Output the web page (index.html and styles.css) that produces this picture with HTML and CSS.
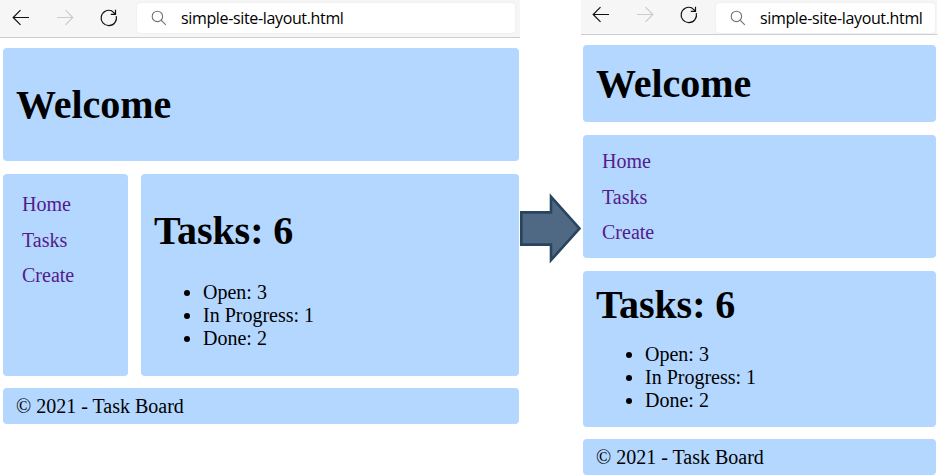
FILE: index.html
```html
<!DOCTYPE html>
<html lang="en">
<head>
<meta charset="utf-8">
<title>Simple site layout</title>
<link rel="stylesheet" href="styles.css">
</head>
<body>
<div class="stage">
  <section class="browser wide">
    <div class="toolbar">
      <svg class="controls" width="137" height="37" viewBox="0 0 137 37" fill="none">
        <path class="ink" d="M29 17.5H13.5M20.5 10.2L13.2 17.5L20.5 24.8"/>
        <path class="muted" d="M57 17.5H72.5M65.5 10.2L72.8 17.5L65.5 24.8"/>
        <path class="ink" d="M116.3 16.2A7.7 7.7 0 1 1 111.8 10.9L115.5 14.2M115.5 9.8V14.3H110.8"/>
      </svg>
      <div class="address">
        <svg class="search" width="16" height="16" viewBox="0 0 16 16" fill="none"><circle cx="6.4" cy="6.4" r="5.2"/><path d="M10.1 10.1L14.8 14.8"/></svg>
        <span>simple-site-layout.html</span>
      </div>
    </div>
    <div class="page">
      <header class="card"><h1>Welcome</h1></header>
      <nav class="card"><a>Home</a><a>Tasks</a><a>Create</a></nav>
      <main class="card">
        <h1>Tasks: 6</h1>
        <ul><li>Open: 3</li><li>In Progress: 1</li><li>Done: 2</li></ul>
      </main>
      <footer class="card">© 2021 - Task Board</footer>
    </div>
  </section>
  <svg class="arrow" width="61" height="72" viewBox="0 0 61 72"><path d="M1.3 20.4H31V4.6L59.5 36.4L31 68.2V52.6H1.3Z"/></svg>
  <section class="browser narrow">
    <div class="toolbar">
      <svg class="controls" width="135" height="34" viewBox="0 0 135 34" fill="none">
        <path class="ink" d="M28 14.5H12.5M19.5 7.2L12.2 14.5L19.5 21.8"/>
        <path class="muted" d="M56 14.5H71.5M64.5 7.2L71.8 14.5L64.5 21.8"/>
        <path class="ink" d="M115.3 13.2A7.7 7.7 0 1 1 110.8 7.9L114.5 11.2M114.5 6.8V11.3H109.8"/>
      </svg>
      <div class="address">
        <svg class="search" width="16" height="16" viewBox="0 0 16 16" fill="none"><circle cx="6.4" cy="6.4" r="5.2"/><path d="M10.1 10.1L14.8 14.8"/></svg>
        <span>simple-site-layout.html</span>
      </div>
    </div>
    <div class="page">
      <header class="card"><h1>Welcome</h1></header>
      <nav class="card"><a>Home</a><a>Tasks</a><a>Create</a></nav>
      <main class="card">
        <h1>Tasks: 6</h1>
        <ul><li>Open: 3</li><li>In Progress: 1</li><li>Done: 2</li></ul>
      </main>
      <footer class="card">© 2021 - Task Board</footer>
    </div>
  </section>
</div>
</body>
</html>
```
FILE: styles.css
```css
* { box-sizing: border-box; }
body {
  margin: 0;
  background: #fff;
  color: #000;
  font: 20px/23px "Liberation Serif", serif;
}
.stage {
  display: grid;
  grid-template-columns: 520px 61px 357px;
  height: 476px;
  overflow: hidden;
}
.toolbar {
  display: flex;
  align-items: flex-start;
  height: 38px;
  padding-right: 5px;
  background: #f6f6f6;
  border-bottom: 1px solid #cecece;
}
.narrow .toolbar { height: 35px; padding-right: 2px; border-right: 1px solid #fff; }
.controls { flex: none; }
.ink { stroke: #111; stroke-width: 1.2; }
.muted { stroke: #ccc; stroke-width: 1.2; }
.address {
  flex: 1;
  display: flex;
  align-items: center;
  height: 30px;
  margin-top: 3px;
  padding-left: 14px;
  background: #fff;
  border-radius: 4px;
  box-shadow: 0 0 2px #e2e2e2;
  font: 16px/22px "Open Sans", sans-serif;
  letter-spacing: -0.35px;
  white-space: nowrap;
}
.search { flex: none; margin-right: 14px; stroke: #707070; stroke-width: 1.1; }
.page { padding: 10px 1px 0 3px; }
.wide .page {
  display: grid;
  grid-template-columns: 125px 378px;
  grid-template-rows: 113px 13px 202px 12px 36px;
  column-gap: 13px;
}
.wide header { grid-area: 1 / 1 / 2 / 3; }
.wide nav { grid-area: 3 / 1; }
.wide main { grid-area: 3 / 2; }
.wide footer { grid-area: 5 / 1 / 6 / 3; }
.card { background: #b3d7ff; border-radius: 4px; padding: 0 13px; }
h1 { margin: 0; font-size: 40px; line-height: 46px; letter-spacing: -0.05px; }
ul { margin: 27px 0 0; padding-left: 49px; }
.wide header, .wide main { padding-top: 34px; }
nav.card { display: flex; flex-direction: column; gap: 12.5px; padding: 19px 19px 0; color: #551a8b; }
footer.card { padding-top: 7px; }
.narrow .page { display: flex; flex-direction: column; gap: 13px; padding: 10px 2px 0; }
.narrow header { height: 77px; padding-top: 16px; }
.narrow nav.card { height: 123px; padding-top: 15px; }
.narrow main { height: 156px; padding-top: 11px; }
.narrow ul { margin-top: 15px; }
.narrow footer { height: 36px; margin-top: -1px; }
.arrow { margin-top: 192px; fill: #4f6984; stroke: #29445e; stroke-width: 2.6; }
```
